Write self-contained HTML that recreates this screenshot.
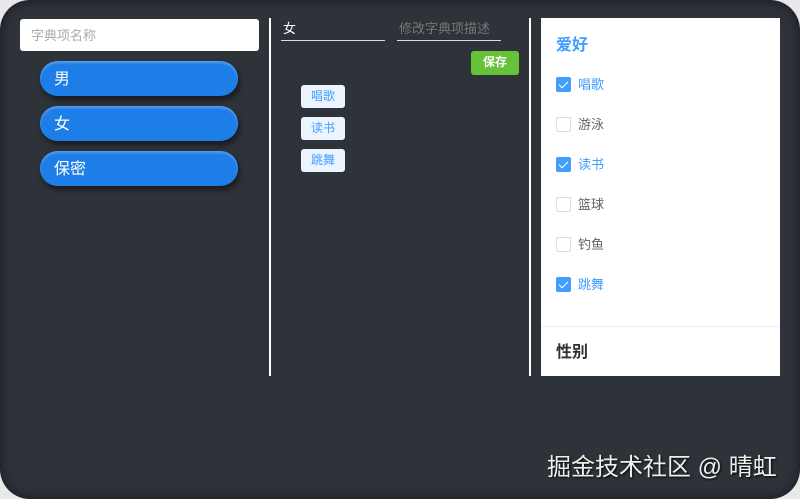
<!DOCTYPE html>
<html><head><meta charset="utf-8"><style>
*{box-sizing:border-box;margin:0;padding:0}
body{width:800px;height:499px;background:#e8e8e8;font-family:"Liberation Sans","Noto Sans CJK SC",sans-serif;overflow:hidden;position:relative}
.frame{position:absolute;left:0;top:0;width:800px;height:499px;background:#2e333a;border-radius:30px;box-shadow:inset 0 0 12px rgba(0,0,0,.5)}
.abs{position:absolute}
.inp{left:20px;top:19px;width:239px;height:32px;background:#fff;border-radius:3px;color:#aaa;font-size:13px;padding:0 11px;line-height:33px}
.btn{left:40px;width:198px;height:35px;background:#1e7ee8;border-radius:18px;color:#fff;font-size:16px;padding:0 14px;line-height:38px;box-shadow:2px 4px 6px rgba(0,0,0,.5), inset 0 2px 2px rgba(255,255,255,.25)}
.vl{width:2px;background:#fff;top:18px;height:358px}
.ul{border-bottom:1px solid #ddd;height:22px;font-size:13px;color:#fff;padding-left:2px;line-height:20px}
.tag{left:301px;width:44px;height:23px;background:#ecf5ff;border-radius:3px;color:#409eff;font-size:12px;text-align:center;line-height:22px}
.panel{left:541px;top:18px;width:239px;height:358px;background:#fff}
.cb{position:absolute;left:15px;width:15px;height:15px;border:1px solid #dcdfe6;border-radius:2px;background:#fff}
.cb.on{background:#409eff;border-color:#409eff}
.cb.on::after{content:"";position:absolute;left:4px;top:1px;width:4px;height:8px;border:solid #fff;border-width:0 1px 1px 0;transform:rotate(45deg)}
.lab{position:absolute;left:37px;font-size:13px;color:#606266;line-height:16px}
.lab.on{color:#409eff}
</style></head><body>
<div class="frame"></div>
<div class="abs inp">字典项名称</div>
<div class="abs btn" style="top:61px">男</div>
<div class="abs btn" style="top:106px">女</div>
<div class="abs btn" style="top:151px">保密</div>
<div class="abs vl" style="left:269px"></div>
<div class="abs vl" style="left:529px"></div>
<div class="abs ul" style="left:281px;top:19px;width:104px">女</div>
<div class="abs ul" style="left:397px;top:19px;width:104px;color:#777">修改字典项描述</div>
<div class="abs" style="left:471px;top:51px;width:48px;height:24px;background:#67c23a;border-radius:3px;color:#fff;font-size:12px;font-weight:bold;text-align:center;line-height:23px">保存</div>
<div class="abs tag" style="top:85px">唱歌</div>
<div class="abs tag" style="top:117px">读书</div>
<div class="abs tag" style="top:149px">跳舞</div>
<div class="abs panel">
<div style="position:absolute;left:15px;top:17px;font-size:16px;font-weight:bold;color:#409eff;line-height:22px">爱好</div>
<div class="cb on" style="top:59px"></div><div class="lab on" style="top:59px">唱歌</div>
<div class="cb" style="top:99px"></div><div class="lab" style="top:99px">游泳</div>
<div class="cb on" style="top:139px"></div><div class="lab on" style="top:139px">读书</div>
<div class="cb" style="top:179px"></div><div class="lab" style="top:179px">篮球</div>
<div class="cb" style="top:219px"></div><div class="lab" style="top:219px">钓鱼</div>
<div class="cb on" style="top:259px"></div><div class="lab on" style="top:259px">跳舞</div>
<div style="position:absolute;left:0;top:308px;width:239px;border-top:1px solid #ebeef5"></div>
<div style="position:absolute;left:15px;top:324px;font-size:16px;font-weight:bold;color:#303133;line-height:22px">性别</div>
</div>
<div class="abs" style="left:547px;top:452px;font-size:24px;line-height:32px;color:#eee;text-shadow:1px 1px 2px #000;white-space:nowrap">掘金技术社区 @ 晴虹</div>
</body></html>
